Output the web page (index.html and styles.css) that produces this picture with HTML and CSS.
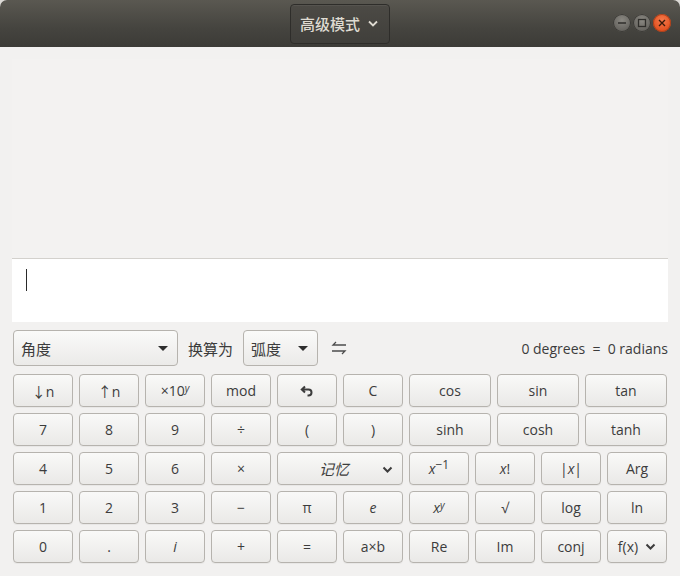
FILE: index.html
```html
<!DOCTYPE html>
<html>
<head>
<meta charset="utf-8">
<link rel="stylesheet" href="styles.css">
</head>
<body>
<div class="window">
  <header class="titlebar">
    <div class="mode-btn">高级模式 <svg class="chev" width="10" height="7" viewBox="0 0 10 7"><path d="M1 1.5 L5 5.5 L9 1.5" fill="none" stroke="#dfdbd2" stroke-width="1.8"/></svg></div>
    <div class="wm">
      <span class="wb min"><svg width="18" height="18" viewBox="0 0 18 18"><path d="M5 9 H13" stroke="#2f2e2b" stroke-width="1.5"/></svg></span>
      <span class="wb max"><svg width="18" height="18" viewBox="0 0 18 18"><rect x="5.5" y="5.5" width="7" height="7" fill="none" stroke="#2f2e2b" stroke-width="1.3"/></svg></span>
      <span class="wb close"><svg width="18" height="18" viewBox="0 0 18 18"><path d="M6 6 L12 12 M12 6 L6 12" stroke="#3a1a0a" stroke-width="1.4"/></svg></span>
    </div>
  </header>
  <main class="content">
    <section class="display">
      <div class="history"></div>
      <div class="entry"><span class="caret"></span></div>
    </section>
    <section class="converter">
      <div class="combo wide"><span>角度</span><span class="tri"></span></div>
      <span class="label">换算为</span>
      <div class="combo narrow"><span>弧度</span><span class="tri"></span></div>
      <svg class="swap" width="16" height="14" viewBox="0 0 16 14"><path d="M15 4 H2 L5 1 M1 10 H14 L11 13" fill="none" stroke="#4c4c4c" stroke-width="1.3"/></svg>
      <span class="result">0 degrees&nbsp; = &nbsp;0 radians</span>
    </section>
    <section class="keys">
      <div class="row">
        <button class="k">↓n</button>
        <button class="k">↑n</button>
        <button class="k">×10<sup class="it">y</sup></button>
        <button class="k">mod</button>
        <button class="k"><svg width="14" height="12" viewBox="0 0 14 12"><path d="M5 1.5 L1.8 4.5 L5 7.5 M2 4.5 H8.5 a3 3 0 0 1 0 6 H7.5" fill="none" stroke="#3c3c3c" stroke-width="2"/></svg></button>
        <button class="k">C</button>
        <button class="k f">cos</button>
        <button class="k f">sin</button>
        <button class="k f">tan</button>
      </div>
      <div class="row">
        <button class="k">7</button>
        <button class="k">8</button>
        <button class="k">9</button>
        <button class="k">÷</button>
        <button class="k">(</button>
        <button class="k">)</button>
        <button class="k f">sinh</button>
        <button class="k f">cosh</button>
        <button class="k f">tanh</button>
      </div>
      <div class="row">
        <button class="k">4</button>
        <button class="k">5</button>
        <button class="k">6</button>
        <button class="k">×</button>
        <button class="k dbl"><span class="it mem">记忆</span><svg class="kchev" width="11" height="7" viewBox="0 0 11 7"><path d="M1.5 1.5 L5.5 5.5 L9.5 1.5" fill="none" stroke="#3c3c3c" stroke-width="2"/></svg></button>
        <button class="k"><span class="it">x</span><sup class="big">−1</sup></button>
        <button class="k"><span class="it">x</span>!</button>
        <button class="k">|<span class="it">x</span>|</button>
        <button class="k">Arg</button>
      </div>
      <div class="row">
        <button class="k">1</button>
        <button class="k">2</button>
        <button class="k">3</button>
        <button class="k">−</button>
        <button class="k">π</button>
        <button class="k"><span class="it">e</span></button>
        <button class="k"><span class="it">x</span><sup class="it">y</sup></button>
        <button class="k">√</button>
        <button class="k">log</button>
        <button class="k">ln</button>
      </div>
      <div class="row">
        <button class="k">0</button>
        <button class="k">.</button>
        <button class="k"><span class="it">i</span></button>
        <button class="k">+</button>
        <button class="k">=</button>
        <button class="k">a×b</button>
        <button class="k">Re</button>
        <button class="k">Im</button>
        <button class="k">conj</button>
        <button class="k fx">f(x)<svg class="kchev" width="11" height="7" viewBox="0 0 11 7"><path d="M1.5 1.5 L5.5 5.5 L9.5 1.5" fill="none" stroke="#3c3c3c" stroke-width="2"/></svg></button>
      </div>
    </section>
  </main>
</div>
</body>
</html>
```
FILE: styles.css
```css
html, body {
  margin: 0;
  padding: 0;
  background: #dcdad6;
}
body {
  width: 680px;
  height: 576px;
  overflow: hidden;
  font-family: "Open Sans", "Noto Sans CJK SC", sans-serif;
  color: #3c3c3c;
}
.window {
  width: 680px;
  height: 576px;
  background: #f2f1f0;
  border-radius: 7px 7px 0 0;
  overflow: hidden;
}
.titlebar {
  height: 47px;
  background: linear-gradient(#5a5851, #45443f 60%, #3c3b37);
  display: flex;
  align-items: center;
  justify-content: center;
  position: relative;
  box-sizing: border-box;
}
.mode-btn {
  height: 40px;
  box-sizing: border-box;
  padding: 0 11px 0 9px;
  border: 1px solid #2e2d2a;
  border-radius: 4px;
  background: linear-gradient(#4c4a45, #403f3b);
  box-shadow: inset 0 1px 0 rgba(255,255,255,0.06);
  color: #dfdbd2;
  font-family: "Noto Sans CJK SC", sans-serif;
  font-size: 15px;
  font-weight: 500;
  display: flex;
  align-items: center;
  gap: 6px;
}
.chev { margin-left: 2px; }
.wm {
  position: absolute;
  right: 9px;
  top: 14px;
  display: flex;
  gap: 2px;
}
.wb {
  width: 18px;
  height: 18px;
  border-radius: 50%;
  display: flex;
  background: radial-gradient(circle at 50% 35%, #8a8882, #65635e 70%);
  box-shadow: inset 0 0 0 1px #3b3a36;
}
.wb.close {
  background: radial-gradient(circle at 50% 35%, #f47a4c, #e2501f 70%);
  box-shadow: inset 0 0 0 1px #a8401c;
}
.content {
  padding: 12px 12px 0 12px;
}
.display {
  display: flex;
  flex-direction: column;
}
.history {
  height: 199px;
  background: #f3f2f1;
  border-bottom: 1px solid #d3d1cd;
}
.entry {
  height: 63px;
  background: #ffffff;
  padding: 10px 0 0 14px;
  box-sizing: border-box;
}
.caret {
  display: block;
  width: 1px;
  height: 22px;
  background: #2a2a2a;
}
.converter {
  margin-top: 8px;
  height: 36px;
  display: flex;
  align-items: center;
  padding-left: 1px;
}
.combo {
  height: 36px;
  box-sizing: border-box;
  border: 1px solid #b6b3ae;
  border-radius: 4px;
  background: linear-gradient(#fafaf9, #ebeae8);
  display: flex;
  align-items: center;
  justify-content: space-between;
  padding: 0 9px 0 7px;
  font-family: "Noto Sans CJK SC", sans-serif;
  font-size: 15px;
  color: #3c3c3c;
}
.combo.wide { width: 165px; }
.combo.narrow { width: 75px; margin-left: 10px; }
.tri {
  width: 0;
  height: 0;
  border-left: 5px solid transparent;
  border-right: 5px solid transparent;
  border-top: 5px solid #2e2e2e;
}
.label {
  margin-left: 10px;
  font-family: "Noto Sans CJK SC", sans-serif;
  font-size: 15px;
}
.swap { margin-left: 13px; }
.result {
  margin-left: auto;
  font-size: 14px;
  color: #3c3c3c;
}
.keys {
  margin-top: 8px;
  padding-left: 1px;
  width: 654px;
  display: flex;
  flex-direction: column;
  gap: 6px;
}
.row {
  display: flex;
  gap: 6px;
}
.k {
  width: 60px;
  height: 33px;
  flex: none;
  box-sizing: border-box;
  border: 1px solid #b6b3ae;
  border-radius: 4px;
  background: linear-gradient(#f9f9f8, #eae9e7);
  box-shadow: 0 1px 0 rgba(0,0,0,0.04);
  font-family: "Open Sans", "Noto Sans CJK SC", sans-serif;
  font-size: 14px;
  color: #3c3c3c;
  padding: 0;
  display: flex;
  align-items: center;
  justify-content: center;
}
.k.f { flex: 1; width: auto; }
.k.dbl { width: 126px; position: relative; }
.k.dbl .kchev { position: absolute; right: 9px; top: 13px; }
.mem { font-family: "Noto Sans CJK SC", sans-serif; font-size: 15px; margin-right: 12px; }
.fx .kchev { margin-left: 7px; }
.it { font-style: italic; }
sup { font-size: 10px; position: relative; top: -3px; vertical-align: top; line-height: 1; }
sup.big { font-size: 12px; top: -4px; }
```
